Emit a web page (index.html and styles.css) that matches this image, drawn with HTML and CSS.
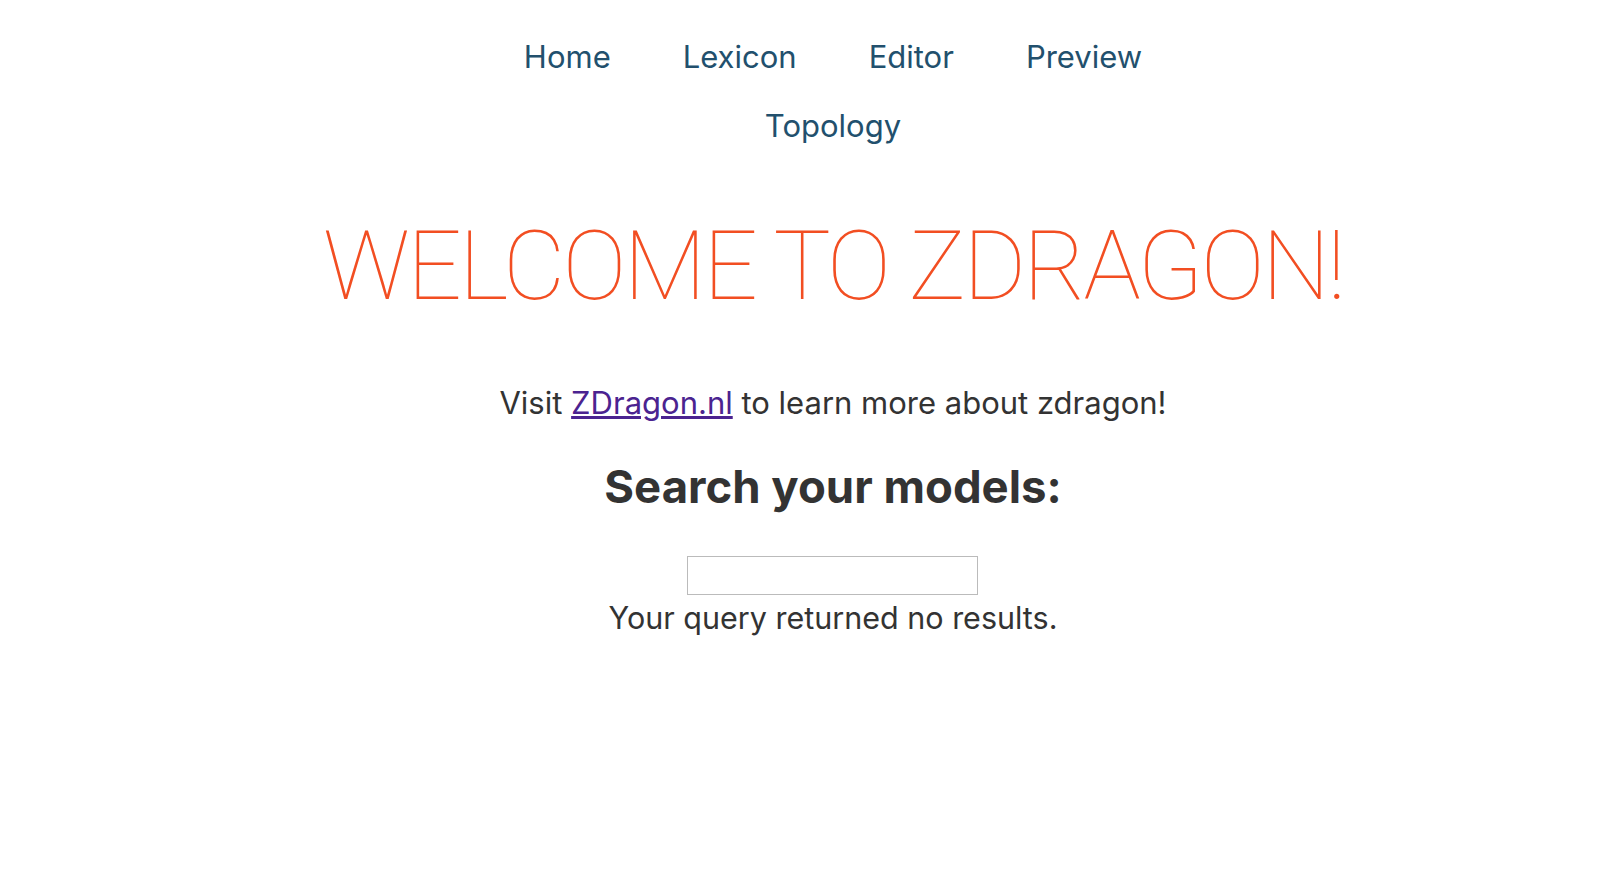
FILE: index.html
```html
<!DOCTYPE html>
<html lang="en">
<head>
<meta charset="utf-8">
<title>ZDragon</title>
<link rel="stylesheet" href="styles.css">
</head>
<body>
<div class="page">
  <nav class="nav">
    <ul class="nav-list">
      <li class="nav-item"><a class="nav-link" href="#">Home</a></li>
      <li class="nav-item"><a class="nav-link" href="#">Lexicon</a></li>
      <li class="nav-item"><a class="nav-link" href="#">Editor</a></li>
      <li class="nav-item"><a class="nav-link" href="#">Preview</a></li>
      <li class="nav-item"><a class="nav-link" href="#">Topology</a></li>
    </ul>
  </nav>
  <main class="main">
    <h1 class="title">WELCOME TO ZDRAGON!</h1>
    <p class="intro">Visit <a class="intro-link" href="#">ZDragon.nl</a> to learn more about zdragon!</p>
    <h2 class="search-title">Search your models:</h2>
    <input class="search-input" type="text" aria-label="Search">
    <div class="result">Your query returned no results.</div>
  </main>
</div>
</body>
</html>
```

FILE: styles.css
```css
html, body {
  margin: 0;
  padding: 0;
  background: #ffffff;
}

body {
  font-family: "Inter", "Liberation Sans", sans-serif;
  color: #333333;
}

.page {
  padding-left: 48px;
  display: flex;
  flex-direction: column;
  align-items: center;
}

.nav {
  padding-top: 38px;
  display: flex;
  justify-content: center;
}

.nav-list {
  list-style: none;
  margin: 0;
  padding: 0;
  max-width: 760px;
  display: flex;
  flex-wrap: wrap;
  justify-content: center;
  column-gap: 72px;
  row-gap: 31px;
}

.nav-item {
  font-size: 31px;
  line-height: 38px;
}

.nav-link {
  color: #22506d;
  text-decoration: none;
}

.main {
  display: flex;
  flex-direction: column;
  align-items: center;
  text-align: center;
}

.title {
  margin: 66px 0 0;
  font-family: "Roboto", "Inter", sans-serif;
  font-size: 96px;
  line-height: 110px;
  font-weight: 100;
  color: #f24e22;
  letter-spacing: -2.7px;
}

.intro {
  margin: 62px 0 0;
  font-size: 31px;
  line-height: 40px;
}

.intro-link {
  color: #4b2390;
  text-decoration: underline;
}

.search-title {
  margin: 36px 0 0;
  font-size: 45.5px;
  line-height: 56px;
  font-weight: 700;
}

.search-input {
  margin-top: 41px;
  width: 291px;
  height: 39px;
  box-sizing: border-box;
  border: 1px solid #bbbbbb;
  padding: 0 6px;
  font-size: 20px;
  font-family: inherit;
}

.result {
  margin-top: 4px;
  font-size: 30.5px;
  line-height: 38px;
}
```
